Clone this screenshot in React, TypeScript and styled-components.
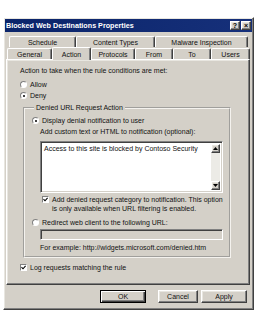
import styled, { createGlobalStyle, css } from 'styled-components'

const GlobalStyle = createGlobalStyle`
  body {
    margin: 0;
    background: #ffffff;
    font-family: 'Liberation Sans', Arial, sans-serif;
    font-size: 7px;
    color: #111;
  }
`

const raised = css`
  border: 1px solid;
  border-color: #ffffff #404040 #404040 #ffffff;
  box-shadow: inset -1px -1px #808080, inset 1px 1px #e8e6e0;
`

const sunken = css`
  border: 1px solid;
  border-color: #808080 #ffffff #ffffff #808080;
  box-shadow: inset 1px 1px #404040, inset -1px -1px #d4d0c8;
`

const Dialog = styled.div`
  margin: 17px 0 0 3px;
  width: 251px;
  height: 293px;
  box-sizing: border-box;
  background: #d4d0c8;
  padding: 1px;
  display: flex;
  flex-direction: column;
  ${raised}
`

const TitleBar = styled.div`
  height: 13px;
  background: linear-gradient(90deg, #0a246a, #16307a);
  color: #fff;
  font-weight: bold;
  font-size: 7.2px;
  display: flex;
  align-items: center;
  justify-content: space-between;
  padding: 0 1px 0 1px;
`

const TitleButtons = styled.div`
  display: flex;
  gap: 1px;
`

const TitleButton = styled.div`
  width: 10px;
  height: 9px;
  box-sizing: border-box;
  background: #d4d0c8;
  color: #000;
  font-size: 7px;
  font-weight: bold;
  line-height: 7px;
  text-align: center;
  ${raised}
`

const Body = styled.div`
  padding: 3px 2px 0 1px;
  display: flex;
  flex-direction: column;
`

const TabRow = styled.div<{ $indent: number }>`
  display: flex;
  padding-left: ${(p) => p.$indent}px;
  height: 12px;
  align-items: flex-end;
`

const Tab = styled.div<{ $w: number; $active?: boolean }>`
  width: ${(p) => p.$w}px;
  height: ${(p) => (p.$active ? 13 : 11)}px;
  box-sizing: border-box;
  border-top: 1px solid #fff;
  border-left: 1px solid #fff;
  border-right: 1px solid #404040;
  box-shadow: inset -1px 0 #808080;
  border-radius: 2px 2px 0 0;
  background: #d4d0c8;
  display: flex;
  align-items: center;
  justify-content: center;
  position: relative;
  ${(p) =>
    p.$active &&
    css`
      margin-bottom: -1px;
      z-index: 1;
    `}
`

const Panel = styled.div`
  height: 226px;
  box-sizing: border-box;
  padding: 4px 0 0 13px;
  display: flex;
  flex-direction: column;
  ${raised}
`

const Line = styled.div<{ $mt?: number; $ml?: number }>`
  line-height: 11px;
  height: 11px;
  margin-top: ${(p) => p.$mt ?? 0}px;
  margin-left: ${(p) => p.$ml ?? 0}px;
  white-space: nowrap;
`

const Option = styled.label<{ $mt?: number }>`
  display: flex;
  align-items: center;
  line-height: 11px;
  margin-top: ${(p) => p.$mt ?? 0}px;
  white-space: nowrap;
`

const Radio = styled.span<{ $checked?: boolean }>`
  width: 7px;
  height: 7px;
  box-sizing: border-box;
  border-radius: 50%;
  border: 1px solid;
  border-color: #808080 #ffffff #ffffff #808080;
  background: #fff;
  margin-right: 3px;
  display: flex;
  align-items: center;
  justify-content: center;
  &::after {
    content: '';
    width: 2px;
    height: 2px;
    border-radius: 50%;
    background: ${(p) => (p.$checked ? '#000' : 'transparent')};
  }
`

const Check = styled.span`
  width: 7px;
  height: 7px;
  flex: none;
  box-sizing: border-box;
  background: #fff;
  border: 1px solid;
  border-color: #808080 #ffffff #ffffff #808080;
  margin-right: 3px;
  display: flex;
  align-items: center;
  justify-content: center;
`

const Group = styled.fieldset`
  margin: 1px 0 0 3px;
  width: 208px;
  box-sizing: border-box;
  border: 2px groove #f4f2ee;
  padding: 2px 0 3px 7px;
`

const Legend = styled.legend`
  padding: 0 2px;
  margin-left: 2px;
  line-height: 11px;
`

const Indent = styled.div`
  margin-left: 8px;
  display: flex;
  flex-direction: column;
`

const TextBox = styled.div`
  margin-top: 4px;
  width: 183px;
  height: 52px;
  box-sizing: border-box;
  background: #fff;
  display: flex;
  ${sunken}
`

const TextContent = styled.div`
  flex: 1;
  padding: 2px 3px;
  line-height: 9px;
`

const ScrollBar = styled.div`
  width: 9px;
  margin: 2px 2px 2px 0;
  display: flex;
  flex-direction: column;
  justify-content: space-between;
  background: #ecebe6;
`

const ScrollArrow = styled.div`
  height: 9px;
  box-sizing: border-box;
  background: #d4d0c8;
  display: flex;
  align-items: center;
  justify-content: center;
  ${raised}
`

const WrapOption = styled.div`
  display: flex;
  align-items: flex-start;
  margin: 2px 0 0 2px;
  line-height: 9px;
  & > span:first-child {
    margin-top: 1px;
  }
`

const UrlInput = styled.div`
  margin-top: 1px;
  width: 183px;
  height: 11px;
  box-sizing: border-box;
  background: #d4d0c8;
  ${sunken}
`

const Footer = styled.div`
  display: flex;
  justify-content: flex-end;
  padding: 5px 3px 0 0;
`

const Button = styled.div<{ $w: number; $ml: number; $default?: boolean }>`
  width: ${(p) => p.$w}px;
  height: 13px;
  margin-left: ${(p) => p.$ml}px;
  box-sizing: border-box;
  background: #d4d0c8;
  display: flex;
  align-items: center;
  justify-content: center;
  ${raised}
  ${(p) =>
    p.$default &&
    css`
      border: 1px solid #000;
      box-shadow: inset 1px 1px #fff, inset -1px -1px #404040, inset -2px -2px #808080;
    `}
`

const Arrow = ({ up }: { up?: boolean }) => (
  <svg width="5" height="3" viewBox="0 0 5 3">
    <path d={up ? 'M0 3 L2.5 0 L5 3 Z' : 'M0 0 L2.5 3 L5 0 Z'} fill="#000" />
  </svg>
)

const Tick = () => (
  <svg width="5" height="5" viewBox="0 0 5 5">
    <path d="M0.5 2.2 L2 3.8 L4.6 0.8" stroke="#000" strokeWidth="1.1" fill="none" />
  </svg>
)

const backTabs: [string, number][] = [
  ['Schedule', 67],
  ['Content Types', 79],
  ['Malware Inspection', 93],
]

const frontTabs: [string, number][] = [
  ['General', 45],
  ['Action', 39],
  ['Protocols', 44],
  ['From', 38],
  ['To', 38],
  ['Users', 39],
]

export default function App() {
  return (
    <>
      <GlobalStyle />
      <Dialog>
        <TitleBar>
          <span>Blocked Web Destinations Properties</span>
          <TitleButtons>
            <TitleButton>?</TitleButton>
            <TitleButton>×</TitleButton>
          </TitleButtons>
        </TitleBar>
        <Body>
          <TabRow $indent={3}>
            {backTabs.map(([t, w]) => (
              <Tab key={t} $w={w}>
                {t}
              </Tab>
            ))}
          </TabRow>
          <TabRow $indent={1}>
            {frontTabs.map(([t, w]) => (
              <Tab key={t} $w={w} $active={t === 'Action'}>
                {t}
              </Tab>
            ))}
          </TabRow>
          <Panel>
            <Line $mt={1}>Action to take when the rule conditions are met:</Line>
            <Option $mt={3}>
              <Radio />
              Allow
            </Option>
            <Option>
              <Radio $checked />
              Deny
            </Option>
            <Group>
              <Legend>Denied URL Request Action</Legend>
              <Option>
                <Radio $checked />
                Display denial notification to user
              </Option>
              <Indent>
                <Line>Add custom text or HTML to notification (optional):</Line>
                <TextBox>
                  <TextContent>Access to this site is blocked by Contoso Security</TextContent>
                  <ScrollBar>
                    <ScrollArrow>
                      <Arrow up />
                    </ScrollArrow>
                    <ScrollArrow>
                      <Arrow />
                    </ScrollArrow>
                  </ScrollBar>
                </TextBox>
                <WrapOption>
                  <Check>
                    <Tick />
                  </Check>
                  <span>
                    Add denied request category to notification. This option
                    <br />
                    is only available when URL filtering is enabled.
                  </span>
                </WrapOption>
              </Indent>
              <Option $mt={4}>
                <Radio />
                Redirect web client to the following URL:
              </Option>
              <Indent>
                <UrlInput />
                <Line $mt={2}>For example: http://widgets.microsoft.com/denied.htm</Line>
              </Indent>
            </Group>
            <Option $mt={4}>
              <Check>
                <Tick />
              </Check>
              Log requests matching the rule
            </Option>
          </Panel>
          <Footer>
            <Button $w={46} $ml={0} $default>
              OK
            </Button>
            <Button $w={40} $ml={12}>
              Cancel
            </Button>
            <Button $w={46} $ml={3}>
              Apply
            </Button>
          </Footer>
        </Body>
      </Dialog>
    </>
  )
}
